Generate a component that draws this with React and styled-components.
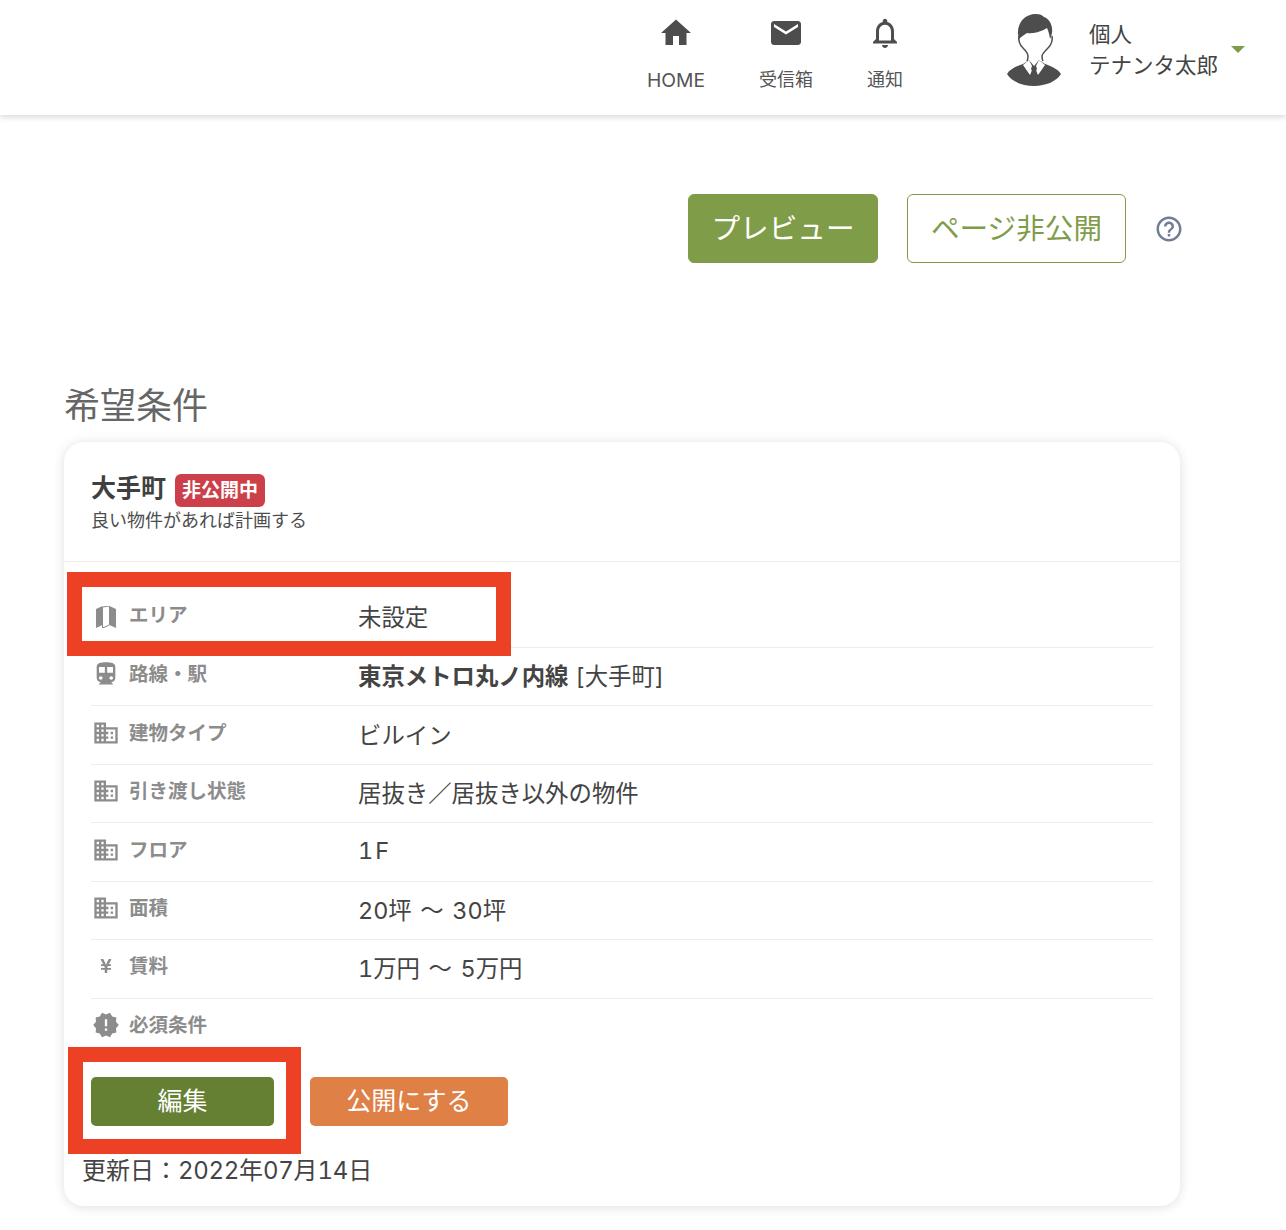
import React from 'react';
import styled, { createGlobalStyle } from 'styled-components';
import { MdHome, MdEmail, MdNotificationsNone, MdHelpOutline, MdDirectionsSubway, MdDomain, MdNewReleases } from 'react-icons/md';
import { FaYenSign } from 'react-icons/fa';

const Global = createGlobalStyle`
  html, body { margin: 0; padding: 0; background: #fff; }
  body { font-family: Inter, "Noto Sans CJK JP", "Liberation Sans", sans-serif; color: #4d4d4d; }
  * { box-sizing: border-box; }
`;

const Page = styled.div`
  width: 1286px;
  height: 1230px;
  overflow: hidden;
  background: #fff;
`;

const Header = styled.header`
  height: 115px;
  display: flex;
  background: #fff;
  box-shadow: 0 2px 6px rgba(0, 0, 0, 0.16);
  padding-left: 621px;
`;

const NavItem = styled.div`
  width: ${p => p.$w}px;
  display: flex;
  flex-direction: column;
  align-items: center;
  padding-top: 15px;
  font-size: ${p => p.$fs || 18}px;
  font-weight: 400;
  line-height: 26px;
  color: #555;
  svg { display: block; color: #4d4d4d; }
  span { margin-top: 16px; }
`;

const User = styled.div`
  display: flex;
  margin-left: 76px;
  padding-top: 14px;
`;

const UserText = styled.div`
  margin-left: 26px;
  padding-top: 5px;
  font-size: 21.5px;
  font-weight: 400;
  line-height: 31px;
  color: #444;
  white-space: nowrap;
`;

const Caret = styled.div`
  width: 0;
  height: 0;
  margin: 32px 0 0 13px;
  border-left: 7px solid transparent;
  border-right: 7px solid transparent;
  border-top: 7px solid #7f9d49;
`;

const Toolbar = styled.div`
  display: flex;
  justify-content: flex-end;
  align-items: center;
  padding: 79px 102px 0 0;
  svg { color: #717d96; margin-left: 28px; }
`;

const TopButton = styled.div`
  height: 69px;
  width: ${p => p.$w}px;
  margin-left: ${p => p.$ml || 0}px;
  padding-bottom: 4px;
  display: flex;
  align-items: center;
  justify-content: center;
  border-radius: 6px;
  border: 1px solid #7f9d49;
  background: ${p => (p.$outline ? '#fff' : '#7f9d49')};
  color: ${p => (p.$outline ? '#7f9d49' : '#fff')};
  font-size: 28.6px;
  font-weight: 400;
  white-space: nowrap;
`;

const Title = styled.h2`
  margin: 118px 0 0 64px;
  height: 61px;
  font-size: 36px;
  font-weight: 400;
  line-height: 50px;
  color: #666;
`;

const Card = styled.section`
  width: 1116px;
  height: 764px;
  margin-left: 64px;
  border-radius: 20px;
  background: #fff;
  box-shadow: 0 1px 12px rgba(0, 0, 0, 0.13);
  position: relative;
`;

const CardHead = styled.div`
  height: 120px;
  padding: 32px 27px 0;
  border-bottom: 1px solid #ececec;
`;

const HeadLine = styled.div`
  display: flex;
  align-items: center;
  gap: 9px;
  height: 33px;
`;

const Place = styled.div`
  font-size: 25px;
  font-weight: 700;
  color: #404040;
  line-height: 36px;
  margin-bottom: 6px;
`;

const Badge = styled.div`
  height: 33px;
  width: 90px;
  border-radius: 6px;
  background: #cb404a;
  color: #fff;
  font-size: 19px;
  font-weight: 700;
  line-height: 33px;
  text-align: center;
`;

const Sub = styled.div`
  margin-top: 1px;
  font-size: 18px;
  font-weight: 400;
  line-height: 26px;
  color: #4d4d4d;
`;

const Rows = styled.div`
  margin: 0 27px;
`;

const Row = styled.div`
  position: relative;
  height: ${p => p.$h || 58.45}px;
  display: flex;
  align-items: center;
  padding-top: ${p => p.$pt || 0}px;
  padding-bottom: ${p => p.$pb || 5}px;
  border-bottom: ${p => (p.$last ? 'none' : '1px solid #ececec')};
`;

const IconBox = styled.div`
  width: 30px;
  display: flex;
  justify-content: center;
  color: #8c8c8c;
  flex: none;
  svg { display: block; }
`;

const Label = styled.div`
  width: 229px;
  margin-left: 8px;
  flex: none;
  font-size: 19.5px;
  font-weight: 700;
  color: #8c8c8c;
  margin-top: -3px;
`;

const Value = styled.div`
  font-size: 23.4px;
  font-weight: 400;
  color: #444;
  white-space: nowrap;
  margin-top: 2px;
  b { font-weight: 700; }
`;

const Num = styled.span`
  font-variant-numeric: tabular-nums;
  letter-spacing: ${p => p.$ls || 0}px;
`;

const Wave = styled.span`
  margin: 0 ${p => p.$m || 2}px;
`;

const Highlight = styled.div`
  position: absolute;
  pointer-events: none;
  border: 15px solid #ec4125;
  left: ${p => p.$l}px;
  top: ${p => p.$t}px;
  width: ${p => p.$w}px;
  height: ${p => p.$h}px;
`;

const Actions = styled.div`
  position: relative;
  display: flex;
  margin: 20px 0 0 27px;
  gap: 36px;
`;

const ActionButton = styled.div`
  height: 49px;
  width: ${p => p.$w}px;
  border-radius: 5px;
  background: ${p => p.$bg};
  color: #fff;
  font-size: 25px;
  font-weight: 400;
  line-height: 49px;
  text-align: center;
`;

const Updated = styled.div`
  margin: 27px 0 0 18px;
  font-size: 24px;
  font-weight: 400;
  line-height: 36px;
  color: #444;
`;

const MapSvg = styled.svg`
  margin-top: 3px;
`;

const Avatar = () => (
  <svg width="58" height="72" viewBox="0 0 58 72" aria-hidden="true">
    <path fill="#4d4d4d" d="M2 60c3-5 10-8 16-10l6-4 5 6 5-6 6 4c6 2 13 5 16 10-4 7-15 12-27 12S6 67 2 60z" />
    <path fill="#fff" d="M18 51l6-5 4 8-3 7zM40 51l-6-5-4 8 3 7z" />
    <path fill="#4d4d4d" d="M27 52h4l1 3-1 2 2 7-4 4-4-4 2-7-1-2z" />
    <path fill="none" stroke="#4d4d4d" strokeWidth="1.5" d="M14 22c-1 5 1 9 4 12 3 3 5 6 5 8 0 2 0 3-1 5M47 22c1 5-1 9-4 12-3 3-6 6-6 8 0 2 0 3 1 5" />
    <path fill="#4d4d4d" d="M14 25C10 12 18 0 31 0c4 0 6 1 8 3 6 2 9 9 8 16-.3 2-1 4-2 6-.5-4-1.500-8-3-11-5 3-12 6-20 5-3 2-6 4-8 6z" />
  </svg>
);

const MapIcon = () => (
  <MapSvg width="20" height="22" viewBox="0 0 20 22" aria-hidden="true">
    <path fill="#8c8c8c" d="M0 3l6.500-3v19L0 22zM13.500 0L20 3v19l-6.500-3z" />
    <path fill="#fff" stroke="#8c8c8c" strokeWidth="1" d="M6.500 1l7-1v19l-7 3z" />
  </MapSvg>
);

const rows = [
  { icon: <MapIcon />, label: 'エリア', value: '未設定' },
  { icon: <MdDirectionsSubway size={28} />, label: '路線・駅', value: <><b>東京メトロ丸ノ内線</b><Wave $m={1}> [大手町]</Wave></> },
  { icon: <MdDomain size={28} />, label: '建物タイプ', value: 'ビルイン' },
  { icon: <MdDomain size={28} />, label: '引き渡し状態', value: '居抜き／居抜き以外の物件' },
  { icon: <MdDomain size={28} />, label: 'フロア', value: <Num $ls={2}>1F</Num> },
  { icon: <MdDomain size={28} />, label: '面積', value: <><Num>20</Num>坪<Wave> 〜 </Wave><Num>30</Num>坪</> },
  { icon: <FaYenSign size={16} />, label: '賃料', value: <><Num>1</Num>万円<Wave> 〜 </Wave><Num>5</Num>万円</> },
  { icon: <MdNewReleases size={28} />, label: '必須条件', value: '' },
];

export default function App() {
  return (
    <Page>
      <Global />
      <Header>
        <NavItem $w={110} $fs={19.3}><MdHome size={36} /><span>HOME</span></NavItem>
        <NavItem $w={110}><MdEmail size={36} /><span>受信箱</span></NavItem>
        <NavItem $w={88}><MdNotificationsNone size={36} /><span>通知</span></NavItem>
        <User>
          <Avatar />
          <UserText>個人<br />テナンタ太郎</UserText>
          <Caret />
        </User>
      </Header>
      <Toolbar>
        <TopButton $w={190}>プレビュー</TopButton>
        <TopButton $w={219} $ml={29} $outline>ページ非公開</TopButton>
        <MdHelpOutline size={30} />
      </Toolbar>
      <Title>希望条件</Title>
      <Card>
        <CardHead>
          <HeadLine>
            <Place>大手町</Place>
            <Badge>非公開中</Badge>
          </HeadLine>
          <Sub>良い物件があれば計画する</Sub>
        </CardHead>
        <Rows>
          {rows.map((r, i) => (
            <Row key={r.label} $h={i === 0 ? 86 : undefined} $pt={i === 0 ? 22 : 0} $pb={i === 0 ? 1 : 5} $last={i === rows.length - 1}>
              <IconBox>{r.icon}</IconBox>
              <Label>{r.label}</Label>
              <Value>{r.value}</Value>
              {i === 0 && <Highlight $l={-24} $t={10} $w={444} $h={84} />}
            </Row>
          ))}
        </Rows>
        <Actions>
          <ActionButton $w={183} $bg="#657f33">編集</ActionButton>
          <ActionButton $w={198} $bg="#df8047">公開にする</ActionButton>
          <Highlight $l={-23} $t={-30} $w={233} $h={107} />
        </Actions>
        <Updated>更新日：<Num $ls={-0.3}>2022</Num>年<Num $ls={-0.3}>07</Num>月<Num $ls={-0.3}>14</Num>日</Updated>
      </Card>
    </Page>
  );
}
